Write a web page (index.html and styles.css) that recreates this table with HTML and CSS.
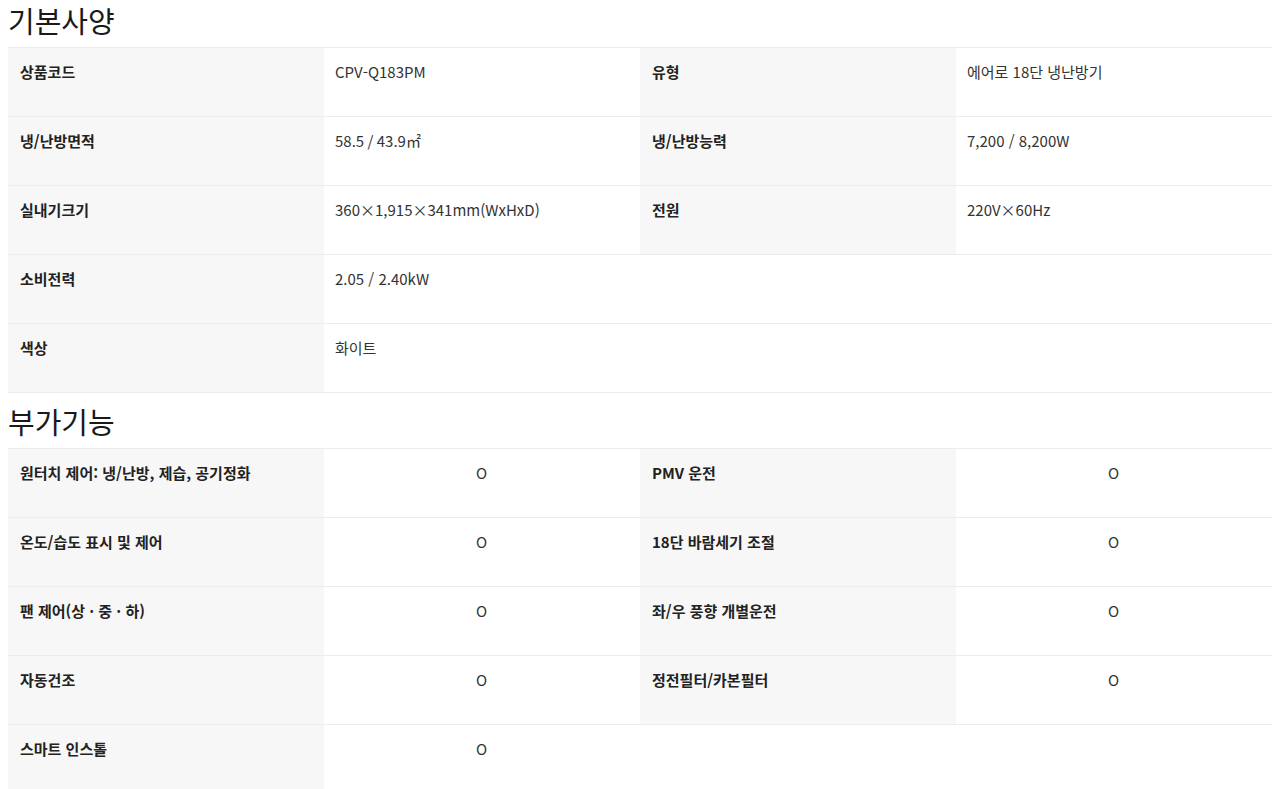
FILE: index.html
```html
<!DOCTYPE html>
<html lang="ko">
<head>
<meta charset="utf-8">
<title>제품 사양</title>
<link rel="stylesheet" href="styles.css">
</head>
<body>
<section class="spec">
  <h2 class="spec-title">기본사양</h2>
  <table class="spec-table">
    <colgroup><col><col><col><col></colgroup>
    <tbody>
      <tr><th>상품코드</th><td>CPV-Q183PM</td><th>유형</th><td>에어로 18단 냉난방기</td></tr>
      <tr><th>냉/난방면적</th><td>58.5 / 43.9㎡</td><th>냉/난방능력</th><td>7,200 / 8,200W</td></tr>
      <tr><th>실내기크기</th><td>360×1,915×341mm(WxHxD)</td><th>전원</th><td>220V×60Hz</td></tr>
      <tr><th>소비전력</th><td>2.05 / 2.40kW</td><td class="empty" colspan="2"></td></tr>
      <tr><th>색상</th><td>화이트</td><td class="empty" colspan="2"></td></tr>
    </tbody>
  </table>
</section>
<section class="spec">
  <h2 class="spec-title">부가기능</h2>
  <table class="spec-table">
    <colgroup><col><col><col><col></colgroup>
    <tbody>
      <tr><th>원터치 제어: 냉/난방, 제습, 공기정화</th><td class="mark">O</td><th>PMV 운전</th><td class="mark">O</td></tr>
      <tr><th>온도/습도 표시 및 제어</th><td class="mark">O</td><th>18단 바람세기 조절</th><td class="mark">O</td></tr>
      <tr><th>팬 제어(상 · 중 · 하)</th><td class="mark">O</td><th>좌/우 풍향 개별운전</th><td class="mark">O</td></tr>
      <tr><th>자동건조</th><td class="mark">O</td><th>정전필터/카본필터</th><td class="mark">O</td></tr>
      <tr><th>스마트 인스톨</th><td class="mark">O</td><td class="empty" colspan="2"></td></tr>
    </tbody>
  </table>
</section>
</body>
</html>
```

FILE: styles.css
```css
html, body {
  background: #ffffff;
}

body {
  margin: 0 8px;
  font-family: "Noto Sans CJK KR", "Noto Sans", sans-serif;
  color: #222222;
}

.spec + .spec {
  margin-top: 8px;
}

.spec-title {
  margin: 0 0 7px;
  font-size: 29px;
  line-height: 40px;
  font-weight: 400;
  color: #1a1a1a;
}

.spec-table {
  width: 100%;
  table-layout: fixed;
  border-collapse: collapse;
  border-spacing: 0;
}

.spec-table col {
  width: 25%;
}

.spec-table th,
.spec-table td {
  height: 69px;
  box-sizing: border-box;
  padding: 13px 12px 0 12px;
  border-top: 1px solid #ececec;
  border-bottom: 1px solid #ececec;
  vertical-align: top;
  text-align: left;
  font-size: 15px;
  line-height: 22px;
}

.spec-table th {
  background: #f7f7f7;
  font-weight: 700;
  color: #222222;
}

.spec-table td {
  padding-left: 11px;
  background: #ffffff;
  font-weight: 400;
  color: #333333;
}

.spec-table td.mark {
  text-align: center;
}
```
